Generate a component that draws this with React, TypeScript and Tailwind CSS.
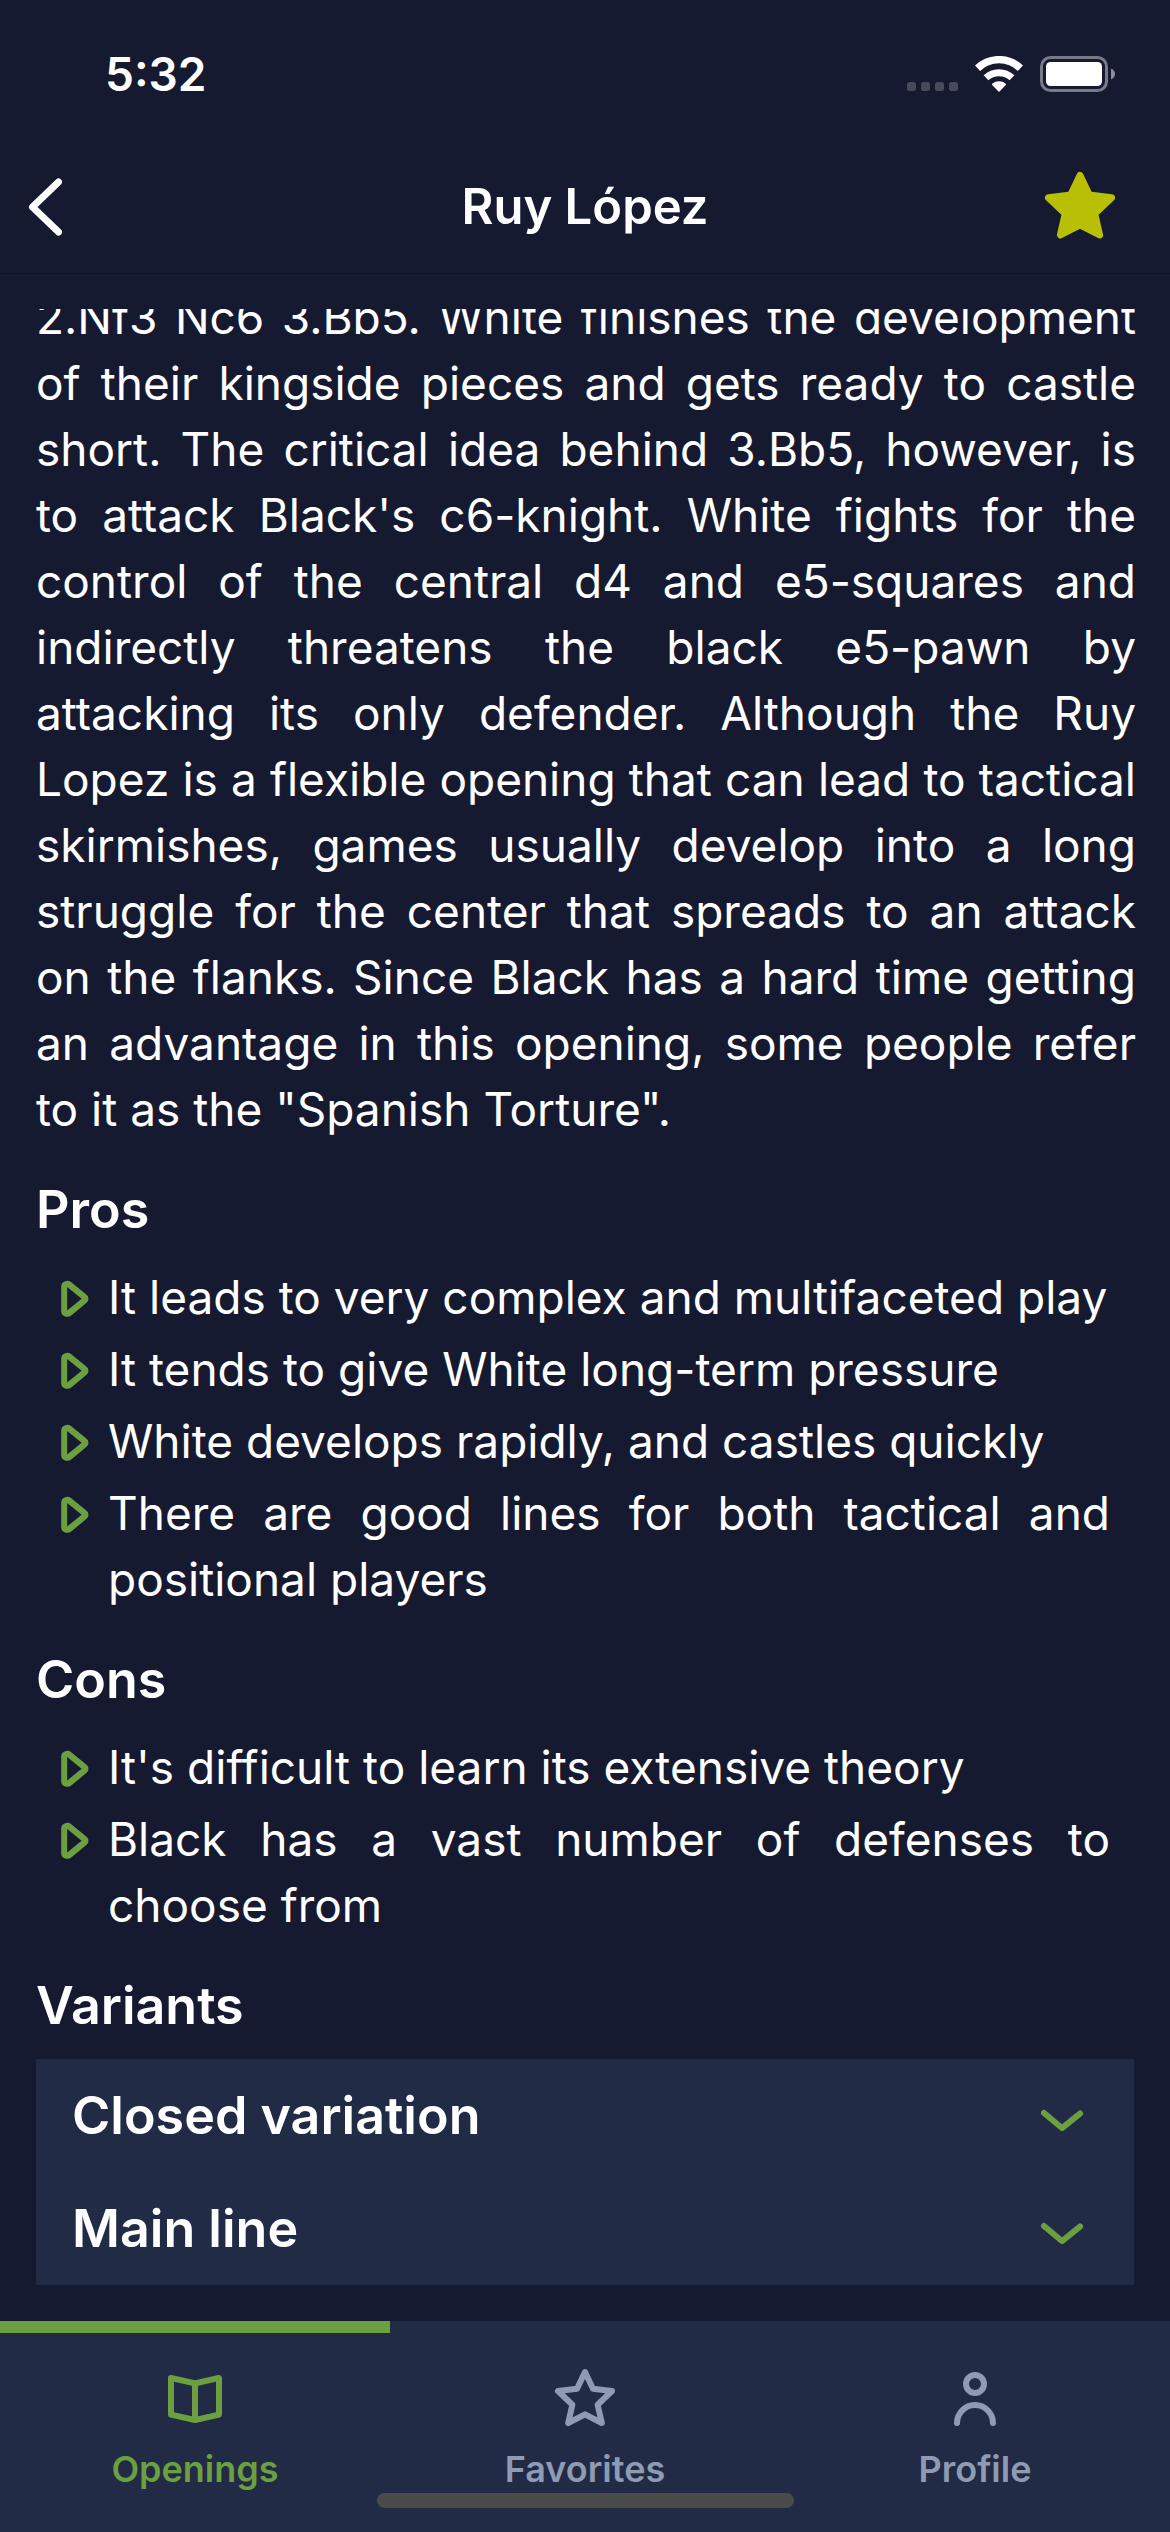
import React from "react";

const STAR =
  "M12 3l2.65 5.6 6.35.75-4.8 4.55 1.4 6.1-5.6-2.9-5.6 2.9 1.4-6.1L3 9.35l6.35-.75z";

const description =
  "2.Nf3 Nc6 3.Bb5. White finishes the development of their kingside pieces and gets ready to castle short. The critical idea behind 3.Bb5, however, is to attack Black's c6-knight. White fights for the control of the central d4 and e5-squares and indirectly threatens the black e5-pawn by attacking its only defender. Although the Ruy Lopez is a flexible opening that can lead to tactical skirmishes, games usually develop into a long struggle for the center that spreads to an attack on the flanks. Since Black has a hard time getting an advantage in this opening, some people refer to it as the \"Spanish Torture\".";

const pros = [
  "It leads to very complex and multifaceted play",
  "It tends to give White long-term pressure",
  "White develops rapidly, and castles quickly",
  "There are good lines for both tactical and positional players",
];

const cons = [
  "It's difficult to learn its extensive theory",
  "Black has a vast number of defenses to choose from",
];

const variants = ["Closed variation", "Main line"];

function StatusBar() {
  return (
    <div className="flex h-[141px] shrink-0 items-center justify-between pt-[7px] pr-[54px] pl-[105px]">
      <span className="text-[46px] leading-none font-semibold">5:32</span>
      <div className="flex items-center">
        <svg className="mr-[17px] h-9 w-[51px]" viewBox="0 0 51 36" fill="#474a5a" aria-hidden="true">
          <rect x="0" y="26" width="9" height="9" rx="2.5" />
          <rect x="14" y="26" width="9" height="9" rx="2.5" />
          <rect x="28" y="26" width="9" height="9" rx="2.5" />
          <rect x="42" y="26" width="9" height="9" rx="2.5" />
        </svg>
        <svg className="mr-[17px] h-9 w-12" viewBox="0 0 48 36" fill="none" aria-hidden="true">
          <path d="M2.6 12.2a31 31 0 0 1 42.8 0" stroke="#fff" strokeWidth="7.4" />
          <path d="M11 21.8a19 19 0 0 1 26 0" stroke="#fff" strokeWidth="7" />
          <path d="M24 36l-6.6-6.8c-.5-.5-.4-1.2.1-1.6a10 10 0 0 1 13 0c.5.4.6 1.1.1 1.6z" fill="#fff" />
        </svg>
        <svg className="h-9 w-[76px]" viewBox="0 0 76 36" fill="none" aria-hidden="true">
          <rect x="1.5" y="1.5" width="65" height="33" rx="9" stroke="#777a87" strokeWidth="3" />
          <rect x="6" y="6" width="56" height="24" rx="4.5" fill="#fff" />
          <path d="M71 12.5c2.6 1 4 3.2 4 5.5s-1.4 4.5-4 5.5z" fill="#8a8c97" />
        </svg>
      </div>
    </div>
  );
}

function Header() {
  return (
    <header className="grid h-[133px] shrink-0 grid-cols-[1fr_auto_1fr] items-center border-b border-[#111325] px-[10px]">
      <button type="button" aria-label="Back" className="justify-self-start">
        <svg className="h-[72px] w-[72px]" viewBox="0 0 72 72" fill="none" stroke="#fff" strokeWidth="7" strokeLinecap="round" strokeLinejoin="round">
          <path d="M48.5 11L22.5 36l26 25" />
        </svg>
      </button>
      <h1 className="text-[49px] leading-16 font-semibold">Ruy López</h1>
      <button type="button" aria-label="Remove from favorites" aria-pressed="true" className="mr-[38px] justify-self-end">
        <svg className="h-[84px] w-[84px]" viewBox="0 0 24 24" fill="#b9bf04" stroke="#b9bf04" strokeWidth="2" strokeLinejoin="round">
          <path d={STAR} />
        </svg>
      </button>
    </header>
  );
}

function SectionTitle({ children }: { children: React.ReactNode }) {
  return <h2 className="mt-9 text-[52px] leading-16 font-semibold">{children}</h2>;
}

function BulletList({ items }: { items: string[] }) {
  return (
    <ul className="mt-[22px] pr-6">
      {items.map((item) => (
        <li key={item} className="flex items-start">
          <svg className="h-[72px] w-[72px] shrink-0" viewBox="0 0.4 24 24" fill="#6c9f40" aria-hidden="true">
            <path
              fillRule="evenodd"
              d="M10.46 18a2.23 2.23 0 0 1-.91-.2 1.76 1.76 0 0 1-1.15-1.59V7.79A1.76 1.76 0 0 1 9.55 6.2a2.1 2.1 0 0 1 2.21.26l5.1 4.21a1.7 1.7 0 0 1 0 2.66l-5.1 4.21a2.06 2.06 0 0 1-1.3.46zM10.4 8.1v7.8l4.8-3.9z"
            />
          </svg>
          <span className="flex-1 text-justify text-[46px] leading-[66px]">{item}</span>
        </li>
      ))}
    </ul>
  );
}

function VariantList() {
  return (
    <div className="mt-[21px] bg-[#222b45]">
      {variants.map((name) => (
        <button key={name} type="button" aria-expanded="false" className="flex h-[113px] w-full items-center justify-between px-9">
          <span className="text-[52px] leading-16 font-semibold">{name}</span>
          <svg className="h-[72px] w-[72px]" viewBox="0 -1 24 24" fill="#6c9f40" aria-hidden="true">
            <path d="M12 16a1 1 0 0 1-.64-.23l-6-5a1 1 0 1 1 1.28-1.54L12 13.71l5.36-4.32a1 1 0 0 1 1.41.15 1 1 0 0 1-.14 1.46l-6 4.83A1 1 0 0 1 12 16z" />
          </svg>
        </button>
      ))}
    </div>
  );
}

function TabBar() {
  return (
    <footer className="shrink-0 bg-[#222b45] pb-6">
      <nav className="grid grid-cols-3 text-[36px] leading-[44px] font-semibold text-[#8f9bb3]">
        <a href="#openings" aria-current="page" className="flex flex-col items-center gap-3 border-t-12 border-[#6c9f40] pt-[30px] text-[#6c9f40]">
          <svg className="h-[72px] w-[72px]" viewBox="0 0 24 24" fill="currentColor" aria-hidden="true">
            <path d="M20.62 4.22a1 1 0 0 0-.84-.2L12 5.77 4.22 4A1 1 0 0 0 3 5v12.2a1 1 0 0 0 .78 1l8 1.8h.44l8-1.8a1 1 0 0 0 .78-1V5a1 1 0 0 0-.38-.78zM5 6.25l6 1.35v10.15L5 16.4zM19 16.4l-6 1.35V7.6l6-1.35z" />
          </svg>
          Openings
        </a>
        <a href="#favorites" className="flex flex-col items-center gap-3 border-t-12 border-transparent pt-[30px]">
          <svg className="h-[72px] w-[72px]" viewBox="0 0 24 24" fill="none" stroke="currentColor" strokeWidth="2" strokeLinejoin="round" aria-hidden="true">
            <path d={STAR} />
          </svg>
          Favorites
        </a>
        <a href="#profile" className="flex flex-col items-center gap-3 border-t-12 border-transparent pt-[30px]">
          <svg className="h-[72px] w-[72px]" viewBox="0 0 24 24" fill="none" stroke="currentColor" strokeWidth="2" strokeLinecap="round" aria-hidden="true">
            <circle cx="12" cy="7" r="3" />
            <path d="M6 20a6 6 0 0 1 12 0" />
          </svg>
          Profile
        </a>
      </nav>
      <div className="mx-auto mt-[2px] h-[15px] w-[417px] rounded-full bg-[#4b4b4b]" />
    </footer>
  );
}

export default function App() {
  return (
    <div className="flex h-screen flex-col bg-[#151a30] font-['Inter',sans-serif] text-white">
      <StatusBar />
      <Header />
      <main className="mt-[35px] flex min-h-0 flex-1 flex-col justify-end overflow-hidden px-9 pb-9">
        <p className="-mr-0.5 text-justify text-[46px] leading-[66px]">{description}</p>
        <SectionTitle>Pros</SectionTitle>
        <BulletList items={pros} />
        <SectionTitle>Cons</SectionTitle>
        <BulletList items={cons} />
        <SectionTitle>Variants</SectionTitle>
        <VariantList />
      </main>
      <TabBar />
    </div>
  );
}
